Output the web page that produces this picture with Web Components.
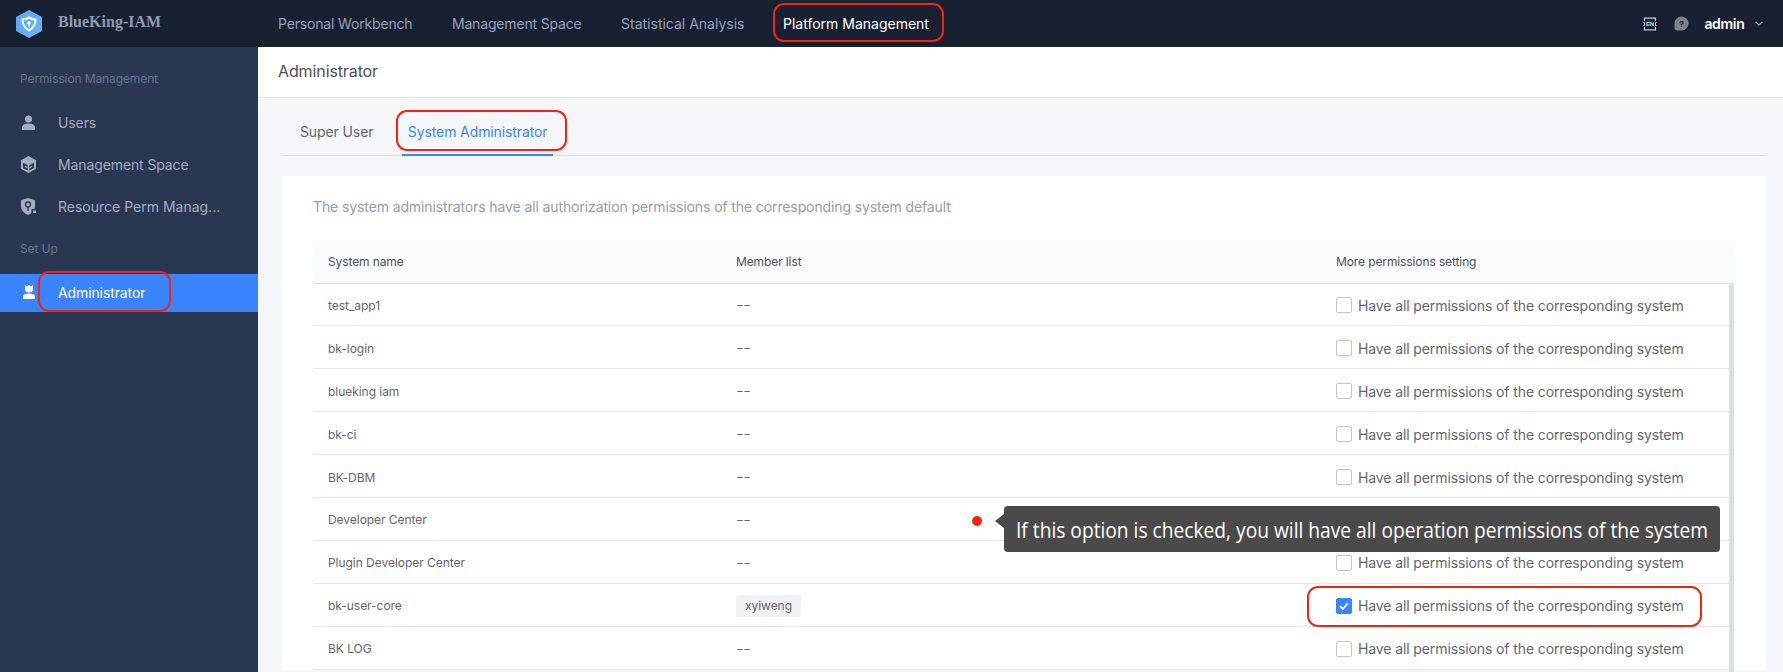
<!DOCTYPE html>
<html lang="en">
<head>
<meta charset="utf-8">
<title>BlueKing-IAM</title>
<style>
html, body {
  margin: 0;
  height: 672px;
  overflow: hidden;
  font-family: Inter, "Liberation Sans", sans-serif;
  font-size: 14px;
  letter-spacing: -0.11px;
  color: #63656e;
}
</style>
</head>
<body>
<iam-app>
  <top-bar slot="top"></top-bar>
  <side-menu slot="side"></side-menu>
  <admin-page slot="main"></admin-page>
</iam-app>

<script>
/**
 * Outer frame of the page.
 */
customElements.define('iam-app', class extends HTMLElement {
  constructor () {
    super()
    this.attachShadow({ mode: 'open' }).innerHTML = `
<style>
:host { display: block; position: relative; width: 1783px; height: 672px; overflow: hidden; }
#body { display: flex; height: 625px; }
</style>
<slot name="top"></slot>
<div id="body">
  <slot name="side"></slot>
  <slot name="main"></slot>
</div>
<mark-box style="left:773px;top:3px;width:171px;height:39px"></mark-box>
<mark-box style="left:38px;top:271px;width:133px;height:41px"></mark-box>
<mark-box style="left:396px;top:110px;width:171px;height:41px"></mark-box>
<mark-box style="left:1307px;top:586px;width:395px;height:41px"></mark-box>
<hint-tip style="left:1004px;top:506px"></hint-tip>`
  }
})

/**
 * Red rounded frame drawn over the screenshot.
 */
customElements.define('mark-box', class extends HTMLElement {
  constructor () {
    super()
    this.attachShadow({ mode: 'open' }).innerHTML = `
<style>
:host { display: block; position: absolute; box-sizing: border-box; border: 2.500px solid #f5230f; border-radius: 11px; }
</style>`
  }
})

/**
 * Dark tooltip with its red dot.
 */
customElements.define('hint-tip', class extends HTMLElement {
  constructor () {
    super()
    this.attachShadow({ mode: 'open' }).innerHTML = `
<style>
:host { display: block; position: absolute; width: 716px; height: 46px; box-sizing: border-box; background: #4a4a4a; border-radius: 4px; color: #fff; font: 400 22px/46px "Open Sans", sans-serif; padding-left: 12px; white-space: nowrap; letter-spacing: 0; }
#text { display: inline-block; transform: scaleX(0.872); transform-origin: left center; }
#arrow { position: absolute; left: -9px; top: 8px; width: 0; height: 0; border: 7px solid transparent; border-left: 0; border-right: 9px solid #4a4a4a; }
#dot { position: absolute; left: -32px; top: 10px; width: 10px; height: 10px; border-radius: 50%; background: #f5230f; }
</style>
<span id="dot"></span><span id="arrow"></span><span id="text">If this option is checked, you will have all operation permissions of the system</span>`
  }
})

/**
 * Dark bar at the top.
 */
customElements.define('top-bar', class extends HTMLElement {
  constructor () {
    super()
    this.attachShadow({ mode: 'open' }).innerHTML = `
<style>
:host { display: flex; align-items: center; height: 47px; background: #182132; color: #96a2b9; }
#logo { display: flex; align-items: center; width: 278px; box-sizing: border-box; padding-left: 16px; }
#logo svg { margin-right: 16px; }
#logo b { font: bold 16px "Liberation Serif", serif; color: #8e9bb1; position: relative; top: -2px; letter-spacing: 0; }
nav { display: flex; flex: 1; letter-spacing: -0.17px; }
nav a { margin-right: 38.500px; white-space: nowrap; }
nav a.wide { letter-spacing: 0; }
nav a.on { color: #fff; letter-spacing: 0; }
#tools { display: flex; align-items: center; padding-right: 20px; }
#user { color: #fff; font-weight: 600; margin: 0 10.500px 0 15px; letter-spacing: -0.3px; }
</style>
<div id="logo">
  <svg width="26" height="28" viewBox="0 0 26 28"><defs><linearGradient id="g" x1="0" y1="0" x2="1" y2="1"><stop offset="0" stop-color="#5aa5f5"/><stop offset="1" stop-color="#6fb4f8"/></linearGradient></defs><path fill="url(#g)" d="M13 0l12 6.500a1.500 1.500 0 0 1 1 1.300v12.400a1.500 1.500 0 0 1-1 1.300L13 28 1 21.500a1.500 1.500 0 0 1-1-1.300V7.800a1.500 1.500 0 0 1 1-1.300z"/><path fill="none" stroke="#fff" stroke-width="2" d="M13 7.500c2.300 1.200 4.500 1.800 6.500 2 0 5-2 8.500-6.500 11-4.500-2.500-6.500-6-6.500-11 2-.2 4.200-.8 6.500-2z"/><circle cx="13" cy="12.800" r="1.800" fill="#fff"/><path fill="#fff" d="M12.300 13.500h1.400v3h-1.400z"/></svg>
  <b>BlueKing-IAM</b>
</div>
<nav><a style="margin-right:39.500px">Personal Workbench</a><a style="margin-right:39.500px">Management Space</a><a class="wide">Statistical Analysis</a><a class="on">Platform Management</a></nav>
<div id="tools">
  <svg width="14" height="14" viewBox="0 0 14 14"><path fill="none" stroke="#c8cdd6" stroke-width="1.200" d="M1.500 4V1.200h11V4M1.500 10v2.800h11V10"/><path fill="none" stroke="#c8cdd6" d="M.5 5.500h1v3h-1M13.500 5.500h-1v3h1"/><text x="7" y="9.300" text-anchor="middle" font-size="6" font-weight="700" fill="#d5d9e0" font-family="Liberation Sans">EN</text></svg>
  <svg style="margin-left:17px" width="15" height="15" viewBox="0 0 15 15"><path fill="#7b828f" d="M7.500.5a7 7 0 0 1 7 7v0a7 7 0 0 1-7 7H3.500A3 3 0 0 1 .5 11.500v-4a7 7 0 0 1 7-7z"/><text x="7.500" y="11" text-anchor="middle" font-size="9" font-weight="700" fill="#182132" font-family="Liberation Sans">?</text></svg>
  <span id="user">admin</span>
  <svg width="8" height="5" viewBox="0 0 8 5"><path fill="none" stroke="#a3acba" stroke-width="1.100" d="M.6.8L4 4l3.400-3.200"/></svg>
</div>`
  }
})

/**
 * One line in the side menu, its icon comes through the slot.
 */
customElements.define('menu-item', class extends HTMLElement {
  constructor () {
    super()
    this.attachShadow({ mode: 'open' }).innerHTML = `
<style>
:host { display: flex; align-items: center; height: 42px; padding-left: 20px; color: #a3aec2; white-space: nowrap; }
:host([active]) { height: 38px; box-sizing: border-box; padding-bottom: 2px; background: #3a84ff; color: #fff; }
#icon { display: flex; justify-content: center; width: 17px; margin-right: 21px; }
</style>
<span id="icon"><slot name="icon"></slot></span><slot></slot>`
  }
})

/**
 * Left menu.
 */
customElements.define('side-menu', class extends HTMLElement {
  constructor () {
    super()
    this.attachShadow({ mode: 'open' }).innerHTML = `
<style>
:host { display: block; flex: none; width: 258px; background: #2a3750; }
h4 { margin: 0; height: 20px; padding-left: 20px; font-size: 12px; font-weight: 400; line-height: 20px; color: #66758e; }
#first { margin-top: 22px; margin-bottom: 12px; }
#second { margin-top: 12px; margin-bottom: 15px; }
</style>
<h4 id="first">Permission Management</h4>
<menu-item><svg slot="icon" width="13" height="15" viewBox="0 0 14 16"><circle cx="7" cy="4.200" r="3.800" fill="#a3aec2"/><path fill="#a3aec2" d="M0 16v-2.500C0 10.500 3 9 7 9s7 1.500 7 4.500V16z"/></svg>Users</menu-item>
<menu-item><svg slot="icon" width="15" height="17" viewBox="0 0 15 17"><path fill="#a3aec2" d="M7.500 0L15 4.200v8.600L7.500 17 0 12.800V4.200z"/><path fill="#2a3750" d="M2 6.700l4.700 2.600v5.200L2 11.900zM13 6.700L8.300 9.300v5.200l4.700-2.600z"/><path fill="#a3aec2" d="M3.800 9.600l2.900 1.600v1.300L3.800 10.900zM11.200 9.600L8.300 11.200v1.300l2.900-1.600z"/></svg>Management Space</menu-item>
<menu-item style="letter-spacing:0"><svg slot="icon" width="15" height="17" viewBox="0 0 15 17"><path fill="#a3aec2" d="M7 0l7 2.300v6c0 4-3 7-7 8.700-4-1.700-7-4.700-7-8.700v-6z"/><circle cx="7" cy="6.500" r="2.500" fill="none" stroke="#2a3750" stroke-width="1.300"/><path stroke="#2a3750" stroke-width="1.300" d="M7 9v4"/><path fill="#2a3750" d="M10.500 11h4.500v6h-4.500z"/><path fill="#a3aec2" d="M12 12.500h3V15h-3z"/></svg>Resource Perm Manag...</menu-item>
<h4 id="second">Set Up</h4>
<menu-item active><svg slot="icon" width="12" height="14" viewBox="0 0 12 14"><path fill="#fff" d="M2 0l2 1.500L6 0l2 1.500L10 0v4.500C10 6.200 8.300 7.500 6 7.500S2 6.200 2 4.500z"/><path fill="#fff" d="M0 14v-2.500c0-2 2.500-3 6-3s6 1 6 3V14z"/></svg>Administrator</menu-item>`
  }
})

/**
 * Checkbox with a label.
 */
customElements.define('check-line', class extends HTMLElement {
  constructor () {
    super()
    this.attachShadow({ mode: 'open' }).innerHTML = `
<style>
:host { display: flex; align-items: center; white-space: nowrap; }
#box { width: 16px; height: 16px; box-sizing: border-box; border: 1px solid #c4c6cc; border-radius: 2px; margin-right: 6px; background: #fff; display: flex; }
:host([checked]) #box { background: #3a84ff; border-color: #3a84ff; }
svg { display: none; }
:host([checked]) svg { display: block; }
</style>
<span id="box"><svg width="14" height="14" viewBox="0 0 14 14"><path fill="none" stroke="#fff" stroke-width="1.800" d="M3 7.200l2.800 2.800L11 4.200"/></svg></span>Have all permissions of the corresponding system`
  }
})

/**
 * One row of the system table.
 */
customElements.define('system-row', class extends HTMLElement {
  constructor () {
    super()
    const member = this.getAttribute('member')
    const checked = member ? 'checked' : ''
    this.attachShadow({ mode: 'open' }).innerHTML = `
<style>
:host { display: grid; grid-template-columns: 408px 600px 1fr; align-items: center; height: 42.900px; box-sizing: border-box; border-bottom: 1px solid #e5e7ec; padding: 2px 0 0 15px; font-size: 12px; letter-spacing: -0.04px; background: #fff; }
.tag { display: inline-block; background: #f0f1f5; border-radius: 2px; padding: 0 9px; line-height: 22px; }
.none { font-size: 17px; font-weight: 300; line-height: 20px; letter-spacing: -0.5px; }
check-line { font-size: 14px; letter-spacing: -0.11px; }
</style>
<span><slot></slot></span>
<span>${member ? `<span class="tag">${member}</span>` : '<span class="none">--</span>'}</span>
<check-line ${checked}></check-line>`
  }
})

/**
 * Main area with title, tabs and table.
 */
customElements.define('admin-page', class extends HTMLElement {
  constructor () {
    super()
    this.attachShadow({ mode: 'open' }).innerHTML = `
<style>
:host { display: block; flex: 1; background: #f5f6fa; overflow: hidden; }
#title { height: 51px; box-sizing: border-box; background: #fff; border-bottom: 1px solid #e5e7ec; padding-left: 20px; font-size: 16px; color: #4d4f56; line-height: 48px; }
#tabs { display: flex; gap: 22.500px; height: 58px; box-sizing: border-box; margin: 0 17px 0 24px; border-bottom: 1px solid #dcdee5; padding-left: 12px; }
#tabs a { display: flex; align-items: center; height: 58px; box-sizing: border-box; padding: 9px 6px 0; white-space: nowrap; color: #63656e; }
#tabs a.on { color: #3a84ff; border-bottom: 2px solid #3a84ff; padding-top: 11px; }
#card { margin: 20px 17px 0 24px; background: #fff; padding: 0 32px 0 31px; }
#note { height: 65px; line-height: 62px; color: #979ba5; }
#head { display: grid; grid-template-columns: 408px 600px 1fr; align-items: center; height: 42.500px; padding-left: 15px; background: #fafbfd; border-bottom: 1px solid #dcdee5; box-sizing: border-box; font-size: 12px; color: #4d4f56; }
#rows { position: relative; }
#bar { position: absolute; right: 0; top: 0; width: 5px; height: 400px; background: #dcdee5; border-radius: 3px; }
</style>
<div id="title">Administrator</div>
<div id="tabs"><a>Super User</a><a class="on">System Administrator</a></div>
<div id="card">
  <div id="note">The system administrators have all authorization permissions of the corresponding system default</div>
  <div id="head"><span>System name</span><span>Member list</span><span>More permissions setting</span></div>
  <div id="rows">
    <system-row>test_app1</system-row>
    <system-row>bk-login</system-row>
    <system-row>blueking iam</system-row>
    <system-row>bk-ci</system-row>
    <system-row>BK-DBM</system-row>
    <system-row>Developer Center</system-row>
    <system-row>Plugin Developer Center</system-row>
    <system-row member="xyiweng">bk-user-core</system-row>
    <system-row>BK LOG</system-row>
    <span id="bar"></span>
  </div>
</div>`
  }
})
</script>
</body>
</html>
